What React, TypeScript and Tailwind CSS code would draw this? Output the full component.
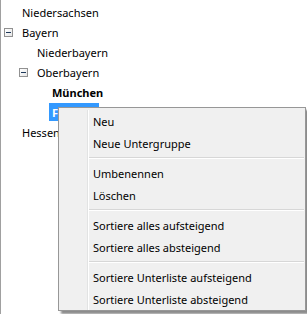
import React from 'react';

type Node = {
  label: string;
  level: 0 | 1 | 2;
  expanded?: boolean;
  bold?: boolean;
  selected?: boolean;
};

const nodes: Node[] = [
  { label: 'Niedersachsen', level: 0 },
  { label: 'Bayern', level: 0, expanded: true },
  { label: 'Niederbayern', level: 1 },
  { label: 'Oberbayern', level: 1, expanded: true },
  { label: 'München', level: 2, bold: true },
  { label: 'Freising', level: 2, selected: true },
  { label: 'Hessen', level: 0 },
];

const indent = ['pl-[3px]', 'pl-[18px]', 'pl-[33px]'];

const menu: (string | null)[] = [
  'Neu',
  'Neue Untergruppe',
  null,
  'Umbenennen',
  'Löschen',
  null,
  'Sortiere alles aufsteigend',
  'Sortiere alles absteigend',
  null,
  'Sortiere Unterliste aufsteigend',
  'Sortiere Unterliste absteigend',
];

// little [-] box of the tree view
function Toggle() {
  return (
    <div className="w-[9px] h-[9px] mt-px border border-[#919191] bg-gradient-to-br from-white to-[#e6e6e6] flex items-center justify-center">
      <div className="w-[5px] h-px bg-[#1e395b]" />
    </div>
  );
}

export default function App() {
  return (
    <div
      className="relative w-[307px] h-[314px] bg-white border-l border-[#a0a0a0] overflow-hidden text-[11px] text-black"
      style={{ fontFamily: '"Noto Sans", "DejaVu Sans", sans-serif' }}
    >
      <div className="pt-[2px]">
        {nodes.map((n) => (
          <div key={n.label} className={`flex items-center h-5 ${indent[n.level]}`}>
            <div className="w-[15px] flex items-center">{n.expanded && <Toggle />}</div>
            <span
              className={`h-[18px] pt-px leading-[18px] px-[3px] ${n.bold ? 'font-bold' : ''} ${
                n.selected ? 'bg-[#3399ff] text-white font-bold' : ''
              }`}
            >
              {n.label}
            </span>
          </div>
        ))}
      </div>

      {/* context menu */}
      <div className="absolute left-[57px] top-[107px] w-[248px] h-[204px] flex pt-[2px] bg-[#f0f0f0] border border-[#979797] shadow-[3px_3px_2px_rgba(0,0,0,0.45)]">
        <div className="w-[29px] border-r border-[#e2e3e3]" />
        <div className="flex-1 flex flex-col border-l border-white">
          {menu.map((item, i) =>
            item === null ? (
              <div key={i} className="h-2 flex flex-col justify-center pr-px">
                <div className="h-px bg-[#d7d7d7]" />
                <div className="h-px bg-white" />
              </div>
            ) : (
              <div key={i} className="h-[22px] pt-px leading-[22px] pl-1 whitespace-nowrap">
                {item}
              </div>
            )
          )}
        </div>
      </div>
    </div>
  );
}
